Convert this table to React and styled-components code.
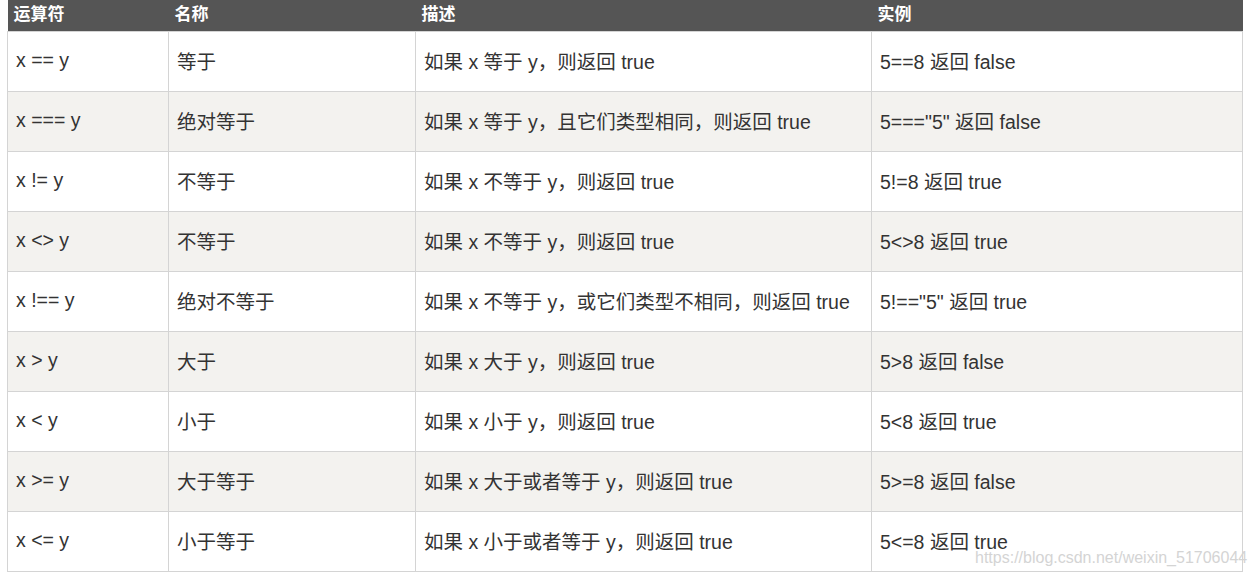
import React from "react";
import styled, { createGlobalStyle } from "styled-components";

const GlobalStyle = createGlobalStyle`
  body {
    margin: 0;
    background: #ffffff;
    font-family: "Liberation Sans", "Noto Sans CJK SC", Arial, sans-serif;
  }
`;

const Page = styled.div`
  position: relative;
  padding-left: 7px;
  width: 1235px;
`;

const Table = styled.table`
  width: 1235px;
  border-collapse: collapse;
  table-layout: fixed;
  color: #333333;
`;

const HeadCell = styled.th`
  background: #555555;
  color: #ffffff;
  text-align: left;
  font-weight: bold;
  font-size: 17px;
  height: 31px;
  padding: 0 6px;
  line-height: 30px;
  box-sizing: border-box;
`;

const Row = styled.tr`
  background: ${(p) => (p.$alt ? "#f3f2ef" : "#ffffff")};
`;

const Cell = styled.td`
  border: 1px solid #d4d4d4;
  height: 60px;
  padding: 0 8px 1px;
  font-size: 19.5px;
  box-sizing: border-box;
  white-space: nowrap;
`;

const Watermark = styled.div`
  position: absolute;
  left: 975px;
  top: 548px;
  font-size: 16px;
  line-height: 20px;
  color: #d4d4d4;
  font-family: "Liberation Sans", Arial, sans-serif;
  white-space: nowrap;
`;

const rows = [
  ["x == y", "等于", "如果 x 等于 y，则返回 true", "5==8 返回 false"],
  ["x === y", "绝对等于", "如果 x 等于 y，且它们类型相同，则返回 true", '5==="5" 返回 false'],
  ["x != y", "不等于", "如果 x 不等于 y，则返回 true", "5!=8 返回 true"],
  ["x <> y", "不等于", "如果 x 不等于 y，则返回 true", "5<>8 返回 true"],
  ["x !== y", "绝对不等于", "如果 x 不等于 y，或它们类型不相同，则返回 true", '5!=="5" 返回 true'],
  ["x > y", "大于", "如果 x 大于 y，则返回 true", "5>8 返回 false"],
  ["x < y", "小于", "如果 x 小于 y，则返回 true", "5<8 返回 true"],
  ["x >= y", "大于等于", "如果 x 大于或者等于 y，则返回 true", "5>=8 返回 false"],
  ["x <= y", "小于等于", "如果 x 小于或者等于 y，则返回 true", "5<=8 返回 true"],
];

const App = () => {
  return (
    <Page>
      <GlobalStyle />
      <Table>
        <colgroup>
          <col style={{ width: 161 }} />
          <col style={{ width: 247 }} />
          <col style={{ width: 456 }} />
          <col style={{ width: 371 }} />
        </colgroup>
        <thead>
          <tr>
            <HeadCell>运算符</HeadCell>
            <HeadCell>名称</HeadCell>
            <HeadCell>描述</HeadCell>
            <HeadCell>实例</HeadCell>
          </tr>
        </thead>
        <tbody>
          {rows.map((r, i) => (
            <Row key={i} $alt={i % 2 === 1}>
              {r.map((c, j) => (
                <Cell key={j}>{c}</Cell>
              ))}
            </Row>
          ))}
        </tbody>
      </Table>
      <Watermark>https://blog.csdn.net/weixin_51706044</Watermark>
    </Page>
  );
};

export default App;
